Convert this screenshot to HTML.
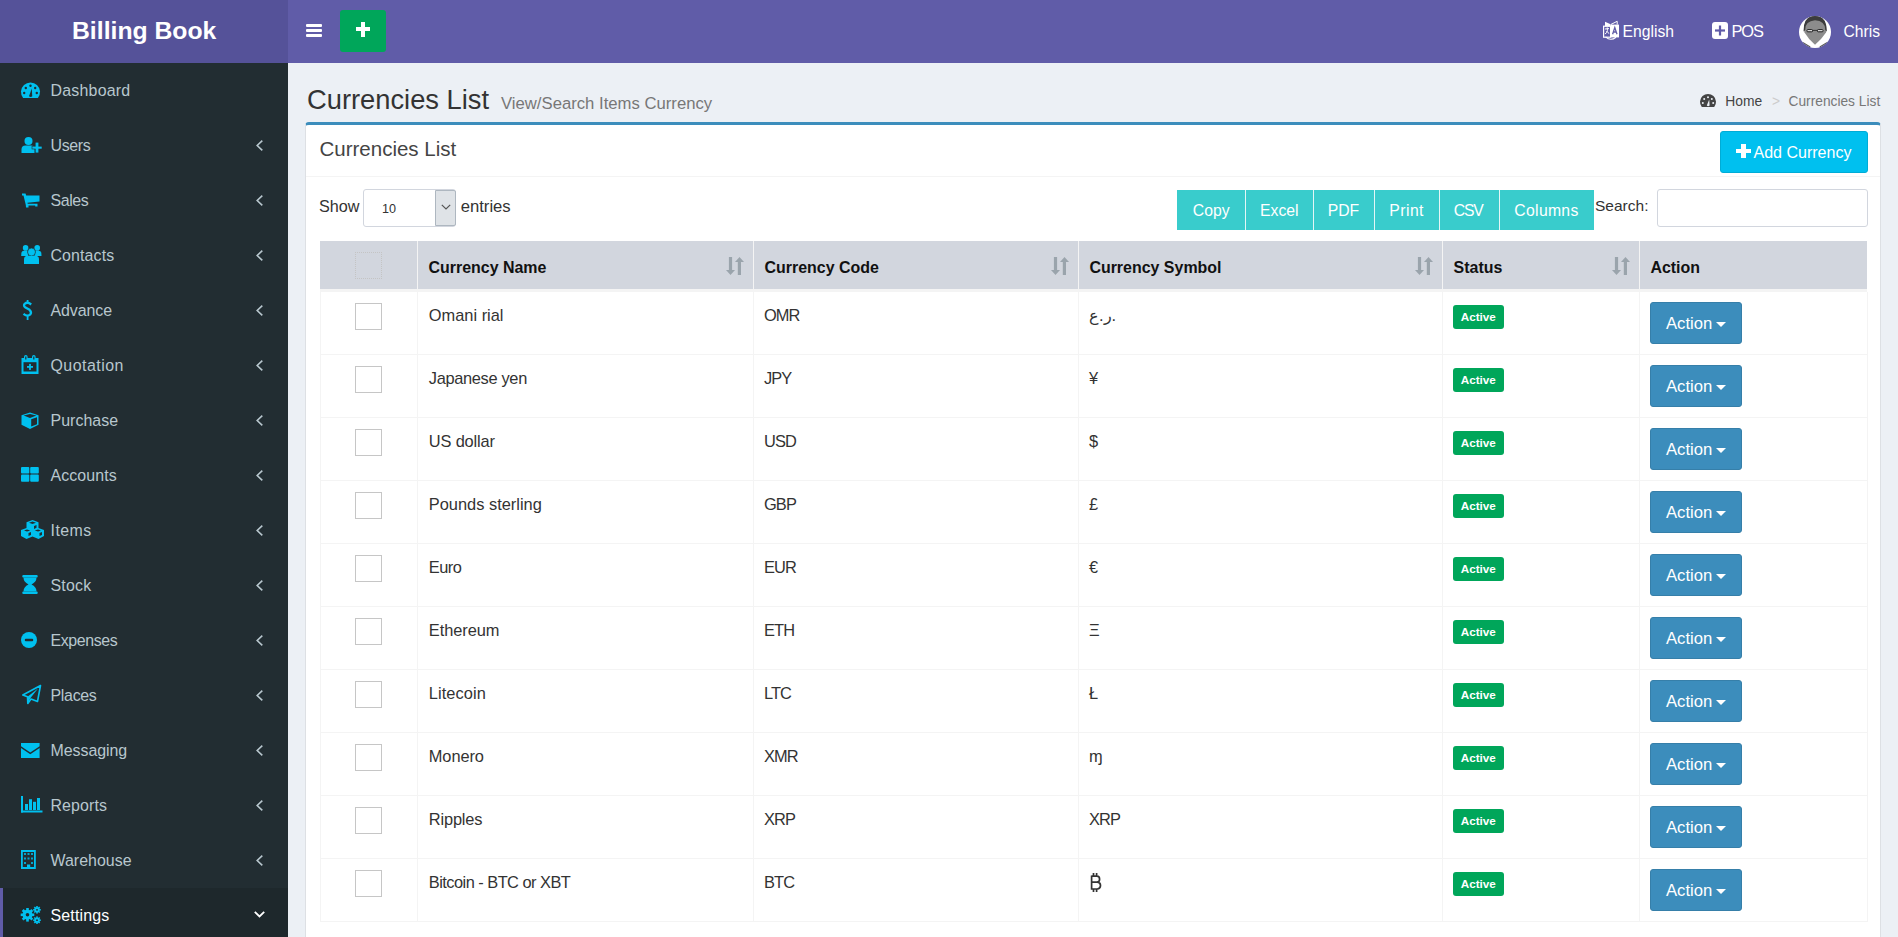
<!DOCTYPE html>
<html><head><meta charset="utf-8"><title>Currencies List</title><style>
*{box-sizing:border-box;margin:0;padding:0}
html,body{width:1898px;height:937px;overflow:hidden;background:#ecf0f5;font-family:"Liberation Sans",sans-serif;color:#333}
.a{position:absolute}
.t{position:absolute;white-space:nowrap;line-height:1}
svg{position:absolute;overflow:visible}
</style></head><body>
<div class="a" style="left:0px;top:0px;width:288px;height:63px;background:#555299"></div>
<div class="a" style="left:288px;top:0px;width:1610px;height:63px;background:#605ca8"></div>
<div class="t" style="left:72px;top:18.65px;font-size:24.75px;color:#fff;font-weight:bold;">Billing Book</div>
<div class="a" style="left:306px;top:24px;width:16px;height:3px;background:#fff;border-radius:1px"></div>
<div class="a" style="left:306px;top:29px;width:16px;height:3px;background:#fff;border-radius:1px"></div>
<div class="a" style="left:306px;top:34px;width:16px;height:3px;background:#fff;border-radius:1px"></div>
<div class="a" style="left:340px;top:10px;width:46px;height:42px;background:#00a65a;border-radius:3px"></div>
<div class="a" style="left:356px;top:27.4px;width:14.4px;height:4px;background:#fff"></div>
<div class="a" style="left:361.2px;top:22px;width:4px;height:15px;background:#fff"></div>
<svg style="left:1603px;top:21px" width="17" height="19" viewBox="0 0 17 19">
<rect x="0.6" y="5.2" width="7" height="11" fill="none" stroke="#fff" stroke-width="1.2"/>
<path d="M2 0.8 L7.6 3.2 L7.6 5.4 L2 5.4 Z" fill="#fff"/>
<path d="M7.6 3.6 L16 3.6 L16 16.4 L7.6 16.4 Z" fill="#fff"/>
<path d="M8 3.4 L14.2 0.3 L14.2 3.6" fill="none" stroke="#fff" stroke-width="1"/>
<path d="M9.6 13.2 L11.8 6.6 L14 13.2 M10.4 11 L13.2 11" fill="none" stroke="#605ca8" stroke-width="1.3"/>
<path d="M2 8 L6 7.6 M4.2 6.4 L4.4 9.5 Q4 12 2 13 M3.5 10 Q5 12 6.2 12.5" fill="none" stroke="#fff" stroke-width="1"/>
<path d="M2.6 15.8 Q7.5 20.5 13 16.2" fill="none" stroke="#fff" stroke-width="1.1"/>
</svg><div class="t" style="left:1622.5px;top:23.71px;font-size:15.7px;color:#fff;font-weight:normal;">English</div>
<svg style="left:1712px;top:22px" width="16" height="17" viewBox="0 0 16 17">
<rect x="0" y="0" width="16" height="17" rx="3" fill="#fff"/>
<rect x="3" y="7.4" width="10" height="2.2" fill="#605ca8"/>
<rect x="6.9" y="3.5" width="2.2" height="10" fill="#605ca8"/>
</svg><div class="t" style="left:1731.5px;top:23.12px;font-size:16.4px;color:#fff;font-weight:normal;letter-spacing:-1.1px">POS</div>
<svg style="left:1799px;top:16px" width="32" height="32" viewBox="0 0 32 32">
<defs><clipPath id="cc"><circle cx="16" cy="16" r="16"/></clipPath></defs>
<g clip-path="url(#cc)">
<rect width="32" height="32" fill="#fff"/>
<path d="M5 14 Q5 1 16 0.5 Q27.5 1 27.5 14 L27 16.5 Q22 24 16 28.8 Q10 24 5.5 16.5 Z" fill="#8c8c8c"/>
<path d="M4.6 15.5 Q4.2 0 16 -0.5 Q28 0 27.8 15.5 L26.2 14 Q26.5 5 16 4.2 Q6 5 6.2 14 Z" fill="#3c3c3c"/>
<rect x="8" y="13.6" width="5.6" height="2.2" rx="0.8" fill="#e8e8e8" stroke="#1e1e1e" stroke-width="1"/>
<rect x="18.4" y="13.6" width="5.6" height="2.2" rx="0.8" fill="#e8e8e8" stroke="#1e1e1e" stroke-width="1"/>
<path d="M13.6 14.4 L18.4 14.4" stroke="#1e1e1e" stroke-width="0.8"/>
<path d="M4 26 L11.5 30.5 L10 33 L2 33 Z" fill="#555"/><path d="M28 26 L20.5 30.5 L22 33 L30 33 Z" fill="#555"/>
</g></svg><div class="t" style="left:1843.5px;top:23.76px;font-size:15.64px;color:#fff;font-weight:normal;">Chris</div>
<div class="a" style="left:0px;top:63px;width:288px;height:874px;background:#222d32"></div>
<svg style="left:21px;top:82.7px" width="19" height="15" viewBox="0 0 19 15">
<path d="M2.1 15 A9.5 9.5 0 1 1 16.9 15 Z" fill="#00c0ef"/>
<circle cx="3.2" cy="10" r="1.2" fill="#222d32"/><circle cx="4.8" cy="5" r="1.2" fill="#222d32"/><circle cx="9.5" cy="2.8" r="1.2" fill="#222d32"/>
<circle cx="14.2" cy="5" r="1.2" fill="#222d32"/><circle cx="15.8" cy="10" r="1.2" fill="#222d32"/>
<path d="M8 13.2 L10.8 5.5 L11.3 13.2 Q9.8 14.8 8 13.2 Z" fill="#222d32"/></svg><div class="t" style="left:50.5px;top:82.50px;font-size:15.95px;color:#b8c7ce;font-weight:normal;letter-spacing:0.212px">Dashboard</div>
<svg style="left:21px;top:137px" width="21" height="16" viewBox="0 0 21 16">
<circle cx="7.5" cy="4" r="4" fill="#00c0ef"/>
<path d="M0.5 16 L0.5 12.5 Q0.5 8.5 4.5 8.5 L10.5 8.5 Q13 8.5 13.5 10 L13.5 16 Z" fill="#00c0ef"/>
<rect x="11" y="9.2" width="10" height="2.8" fill="#00c0ef" stroke="#222d32" stroke-width="0.6"/>
<rect x="14.6" y="5.6" width="2.8" height="10" fill="#00c0ef"/></svg><div class="t" style="left:50.5px;top:137.50px;font-size:15.95px;color:#b8c7ce;font-weight:normal;letter-spacing:-0.375px">Users</div>
<svg style="left:256px;top:139.5px" width="7" height="11" viewBox="0 0 7 11"><path d="M6.3 0.7 L1.2 5.5 L6.3 10.3" fill="none" stroke="#b8c7ce" stroke-width="1.6"/></svg>
<svg style="left:21.5px;top:193px" width="18" height="15" viewBox="0 0 18 15">
<path d="M0 0.5 L3.5 0.5 L4.2 2.5 L17.5 2.5 L17.5 8.5 L5.5 9.8 L5.7 10.8 L15.5 10.8 L15.5 13.5 L13.2 13.5 L13.2 12.6 L6.5 12.6 L6.5 14.5 L4 14.5 L3.8 12 L1.5 2.6 L0 2.6 Z" fill="#00c0ef"/></svg><div class="t" style="left:50.5px;top:192.50px;font-size:15.95px;color:#b8c7ce;font-weight:normal;letter-spacing:-0.400px">Sales</div>
<svg style="left:256px;top:194.5px" width="7" height="11" viewBox="0 0 7 11"><path d="M6.3 0.7 L1.2 5.5 L6.3 10.3" fill="none" stroke="#b8c7ce" stroke-width="1.6"/></svg>
<svg style="left:21px;top:245px" width="21" height="19" viewBox="0 0 21 19">
<circle cx="4.6" cy="2.9" r="2.8" fill="#00c0ef"/><circle cx="16.2" cy="2.9" r="2.8" fill="#00c0ef"/>
<path d="M0.2 11 L0.4 7.8 Q0.8 5.8 3 5.8 L6.8 5.8 L7.2 11 Z" fill="#00c0ef"/><path d="M20.5 11 L20.3 7.8 Q19.9 5.8 17.7 5.8 L13.9 5.8 L13.5 11 Z" fill="#00c0ef"/>
<circle cx="10.5" cy="7" r="4" fill="#00c0ef" stroke="#222d32" stroke-width="0.7"/>
<path d="M3 19 L3 14.5 Q3 10.8 6.5 10.8 L14.5 10.8 Q18 10.8 18 14.5 L18 19 Z" fill="#00c0ef"/></svg><div class="t" style="left:50.5px;top:247.50px;font-size:15.95px;color:#b8c7ce;font-weight:normal;letter-spacing:0.114px">Contacts</div>
<svg style="left:256px;top:249.5px" width="7" height="11" viewBox="0 0 7 11"><path d="M6.3 0.7 L1.2 5.5 L6.3 10.3" fill="none" stroke="#b8c7ce" stroke-width="1.6"/></svg>
<svg style="left:21.5px;top:299.5px" width="11" height="20" viewBox="0 0 11 20">
<path d="M9.2 4.5 Q5.5 1.5 2.7 3.8 Q1 5.8 3.5 7.6 L7.5 9.8 Q10 11.8 8.3 14.5 Q5.5 17 1.5 13.8" fill="none" stroke="#00c0ef" stroke-width="2.3"/>
<rect x="4.7" y="0" width="1.8" height="4" fill="#00c0ef"/><rect x="4.7" y="15.5" width="1.8" height="4.5" fill="#00c0ef"/></svg><div class="t" style="left:50.5px;top:302.50px;font-size:15.95px;color:#b8c7ce;font-weight:normal;letter-spacing:-0.083px">Advance</div>
<svg style="left:256px;top:304.5px" width="7" height="11" viewBox="0 0 7 11"><path d="M6.3 0.7 L1.2 5.5 L6.3 10.3" fill="none" stroke="#b8c7ce" stroke-width="1.6"/></svg>
<svg style="left:21px;top:355px" width="18" height="19" viewBox="0 0 18 19">
<path d="M0.5 3 L17.5 3 L17.5 19 L0.5 19 Z" fill="#00c0ef"/>
<rect x="2.5" y="7.2" width="13" height="9.3" fill="#222d32"/>
<rect x="3" y="0" width="3.6" height="5.5" rx="1.8" fill="#00c0ef"/><rect x="11" y="0" width="3.6" height="5.5" rx="1.8" fill="#00c0ef"/>
<rect x="4.2" y="1.5" width="1.2" height="3" fill="#222d32"/><rect x="12.2" y="1.5" width="1.2" height="3" fill="#222d32"/>
<rect x="6" y="11" width="6" height="1.8" fill="#00c0ef"/><rect x="8.1" y="8.9" width="1.8" height="6" fill="#00c0ef"/></svg><div class="t" style="left:50.5px;top:357.50px;font-size:15.95px;color:#b8c7ce;font-weight:normal;letter-spacing:0.475px">Quotation</div>
<svg style="left:256px;top:359.5px" width="7" height="11" viewBox="0 0 7 11"><path d="M6.3 0.7 L1.2 5.5 L6.3 10.3" fill="none" stroke="#b8c7ce" stroke-width="1.6"/></svg>
<svg style="left:21px;top:411.5px" width="18" height="18" viewBox="0 0 18 18">
<path d="M9 0.5 L17.5 3.2 L17.5 12.8 L9 17 L0.5 12.8 L0.5 3.2 Z" fill="#00c0ef"/>
<path d="M2.7 3.5 L9 1.9 L15.4 3.5 L9 6 Z" fill="#222d32"/>
<path d="M10.2 7.3 L16 5.2 L16 12.3 L10.2 14.6 Z" fill="#222d32"/></svg><div class="t" style="left:50.5px;top:412.50px;font-size:15.95px;color:#b8c7ce;font-weight:normal;letter-spacing:0.043px">Purchase</div>
<svg style="left:256px;top:414.5px" width="7" height="11" viewBox="0 0 7 11"><path d="M6.3 0.7 L1.2 5.5 L6.3 10.3" fill="none" stroke="#b8c7ce" stroke-width="1.6"/></svg>
<svg style="left:21px;top:466.5px" width="18" height="15" viewBox="0 0 18 15">
<rect x="0" y="0" width="8.3" height="6.6" rx="1" fill="#00c0ef"/><rect x="9.2" y="0" width="8.6" height="6.6" rx="1" fill="#00c0ef"/>
<rect x="0" y="7.6" width="8.3" height="7.2" rx="1" fill="#00c0ef"/><rect x="9.2" y="7.6" width="8.6" height="7.2" rx="1" fill="#00c0ef"/></svg><div class="t" style="left:50.5px;top:467.50px;font-size:15.95px;color:#b8c7ce;font-weight:normal;letter-spacing:0.100px">Accounts</div>
<svg style="left:256px;top:469.5px" width="7" height="11" viewBox="0 0 7 11"><path d="M6.3 0.7 L1.2 5.5 L6.3 10.3" fill="none" stroke="#b8c7ce" stroke-width="1.6"/></svg>
<svg style="left:21px;top:520px" width="23" height="19" viewBox="0 0 23 19">
<path d="M11.5 0 L17.5 2.3 L17.5 8 L23 10 L23 16 L17.5 19 L11.5 16.5 L5.5 19 L0 16 L0 10 L5.5 8 L5.5 2.3 Z" fill="#00c0ef"/>
<path d="M8 2.8 L11.5 1.6 L15 2.8 L11.5 4 Z" fill="#222d32"/>
<path d="M3 10.5 L6 9.5 L9.2 10.5 L6 11.6 Z" fill="#222d32"/><path d="M13.8 10.5 L17 9.5 L20 10.5 L17 11.6 Z" fill="#222d32"/>
<path d="M13 6 L15.5 5 L15.5 7.8 L13 9 Z" fill="#222d32"/>
<path d="M7.5 13 L10 12 L10 15 L7.5 16 Z" fill="#222d32"/><path d="M18.5 13 L21 12 L21 15 L18.5 16 Z" fill="#222d32"/></svg><div class="t" style="left:50.5px;top:522.50px;font-size:15.95px;color:#b8c7ce;font-weight:normal;letter-spacing:0.450px">Items</div>
<svg style="left:256px;top:524.5px" width="7" height="11" viewBox="0 0 7 11"><path d="M6.3 0.7 L1.2 5.5 L6.3 10.3" fill="none" stroke="#b8c7ce" stroke-width="1.6"/></svg>
<svg style="left:21.5px;top:575px" width="16" height="19" viewBox="0 0 16 19">
<rect x="0.3" y="0" width="15.4" height="2.6" rx="1" fill="#00c0ef"/><rect x="0.3" y="16.4" width="15.4" height="2.6" rx="1" fill="#00c0ef"/>
<path d="M1.5 2.6 L14.5 2.6 Q14.5 7 9.5 9.5 Q14.5 12 14.5 16.4 L1.5 16.4 Q1.5 12 6.5 9.5 Q1.5 7 1.5 2.6 Z" fill="#00c0ef"/></svg><div class="t" style="left:50.5px;top:577.50px;font-size:15.95px;color:#b8c7ce;font-weight:normal;letter-spacing:0.200px">Stock</div>
<svg style="left:256px;top:579.5px" width="7" height="11" viewBox="0 0 7 11"><path d="M6.3 0.7 L1.2 5.5 L6.3 10.3" fill="none" stroke="#b8c7ce" stroke-width="1.6"/></svg>
<svg style="left:21.4px;top:631.6px" width="16" height="16" viewBox="0 0 16 16">
<circle cx="8" cy="8" r="8" fill="#00c0ef"/><rect x="3.8" y="6.8" width="8.4" height="2.4" rx="1" fill="#222d32"/></svg><div class="t" style="left:50.5px;top:632.50px;font-size:15.95px;color:#b8c7ce;font-weight:normal;letter-spacing:-0.386px">Expenses</div>
<svg style="left:256px;top:634.5px" width="7" height="11" viewBox="0 0 7 11"><path d="M6.3 0.7 L1.2 5.5 L6.3 10.3" fill="none" stroke="#b8c7ce" stroke-width="1.6"/></svg>
<svg style="left:21.5px;top:685px" width="19" height="19" viewBox="0 0 19 19">
<path d="M18.5 0.5 L0.8 10 L5.5 11.8 L5.8 18.5 L9 14 L15.5 16.5 Z" fill="none" stroke="#00c0ef" stroke-width="1.6" stroke-linejoin="round"/>
<path d="M5.5 11.8 L16 3.5 L8.5 13 L5.8 18 Z" fill="#00c0ef"/></svg><div class="t" style="left:50.5px;top:687.50px;font-size:15.95px;color:#b8c7ce;font-weight:normal;letter-spacing:-0.300px">Places</div>
<svg style="left:256px;top:689.5px" width="7" height="11" viewBox="0 0 7 11"><path d="M6.3 0.7 L1.2 5.5 L6.3 10.3" fill="none" stroke="#b8c7ce" stroke-width="1.6"/></svg>
<svg style="left:21.4px;top:742.8px" width="19" height="15" viewBox="0 0 19 15">
<path d="M0 0 L18.6 0 L18.6 3.2 L9.3 9.5 L0 3.2 Z" fill="#00c0ef"/>
<path d="M0 5 L9.3 11.3 L18.6 5 L18.6 15 L0 15 Z" fill="#00c0ef"/></svg><div class="t" style="left:50.5px;top:742.50px;font-size:15.95px;color:#b8c7ce;font-weight:normal;letter-spacing:-0.050px">Messaging</div>
<svg style="left:256px;top:744.5px" width="7" height="11" viewBox="0 0 7 11"><path d="M6.3 0.7 L1.2 5.5 L6.3 10.3" fill="none" stroke="#b8c7ce" stroke-width="1.6"/></svg>
<svg style="left:21px;top:796.3px" width="22" height="17" viewBox="0 0 22 17">
<rect x="0" y="0" width="2" height="16.5" fill="#00c0ef"/><rect x="0" y="14.5" width="21.5" height="2" fill="#00c0ef"/>
<rect x="4" y="8" width="3" height="6" fill="#00c0ef"/><rect x="8" y="3.2" width="3" height="10.8" fill="#00c0ef"/>
<rect x="12" y="5.8" width="3" height="8.2" fill="#00c0ef"/><rect x="16" y="2" width="3" height="12" fill="#00c0ef"/></svg><div class="t" style="left:50.5px;top:797.50px;font-size:15.95px;color:#b8c7ce;font-weight:normal;letter-spacing:0.100px">Reports</div>
<svg style="left:256px;top:799.5px" width="7" height="11" viewBox="0 0 7 11"><path d="M6.3 0.7 L1.2 5.5 L6.3 10.3" fill="none" stroke="#b8c7ce" stroke-width="1.6"/></svg>
<svg style="left:21.4px;top:850px" width="15" height="19" viewBox="0 0 15 19">
<path d="M0 0 L14.8 0 L14.8 19 L0 19 Z M1.8 2 L1.8 17 L13 17 L13 2 Z" fill="#00c0ef" fill-rule="evenodd"/>
<g fill="#00c0ef" opacity="0.8"><rect x="3" y="3" width="2" height="2"/><rect x="6.5" y="3" width="2" height="2"/><rect x="10" y="3" width="2" height="2"/>
<rect x="3" y="7.5" width="2" height="2"/><rect x="6.5" y="7.5" width="2" height="2"/><rect x="10" y="7.5" width="2" height="2"/>
<rect x="3" y="12" width="2" height="2"/><rect x="10" y="12" width="2" height="2"/></g>
<rect x="6" y="14.5" width="3.2" height="3" fill="#00c0ef"/></svg><div class="t" style="left:50.5px;top:852.50px;font-size:15.95px;color:#b8c7ce;font-weight:normal;letter-spacing:0.025px">Warehouse</div>
<svg style="left:256px;top:854.5px" width="7" height="11" viewBox="0 0 7 11"><path d="M6.3 0.7 L1.2 5.5 L6.3 10.3" fill="none" stroke="#b8c7ce" stroke-width="1.6"/></svg>
<div class="a" style="left:0px;top:888px;width:288px;height:55px;background:#1e282c"></div>
<div class="a" style="left:0px;top:888px;width:3px;height:55px;background:#605ca8"></div>
<svg style="left:21px;top:905.5px" width="20" height="18" viewBox="0 0 20 18">
<g fill="#00c0ef"><circle cx="6.5" cy="8.8" r="5"/>
<g transform="translate(6.5 8.8)"><rect x="-1.3" y="-6.8" width="2.6" height="13.6"/><rect x="-6.8" y="-1.3" width="13.6" height="2.6"/>
<rect x="-1.3" y="-6.8" width="2.6" height="13.6" transform="rotate(45)"/><rect x="-1.3" y="-6.8" width="2.6" height="13.6" transform="rotate(-45)"/></g>
<circle cx="16" cy="3.8" r="2.6"/><g transform="translate(16 3.8)"><rect x="-0.8" y="-3.8" width="1.6" height="7.6"/><rect x="-3.8" y="-0.8" width="7.6" height="1.6"/>
<rect x="-0.8" y="-3.8" width="1.6" height="7.6" transform="rotate(45)"/><rect x="-0.8" y="-3.8" width="1.6" height="7.6" transform="rotate(-45)"/></g>
<circle cx="16" cy="14.2" r="2.6"/><g transform="translate(16 14.2)"><rect x="-0.8" y="-3.8" width="1.6" height="7.6"/><rect x="-3.8" y="-0.8" width="7.6" height="1.6"/>
<rect x="-0.8" y="-3.8" width="1.6" height="7.6" transform="rotate(45)"/><rect x="-0.8" y="-3.8" width="1.6" height="7.6" transform="rotate(-45)"/></g></g>
<circle cx="6.5" cy="8.8" r="1.8" fill="#1e282c"/><circle cx="16" cy="3.8" r="0.9" fill="#1e282c"/><circle cx="16" cy="14.2" r="0.9" fill="#1e282c"/></svg><div class="t" style="left:50.5px;top:907.50px;font-size:15.95px;color:#fff;font-weight:normal;letter-spacing:0.157px">Settings</div>
<svg style="left:254px;top:911px" width="11" height="7" viewBox="0 0 11 7"><path d="M0.8 0.8 L5.5 5.5 L10.2 0.8" fill="none" stroke="#fff" stroke-width="1.8"/></svg>
<div class="t" style="left:307px;top:86.19px;font-size:27.3px;color:#333;font-weight:normal;">Currencies List</div>
<div class="t" style="left:501px;top:96.16px;font-size:16.7px;color:#777;font-weight:normal;">View/Search Items Currency</div>
<svg style="left:1700px;top:95px" width="16" height="12" viewBox="0 0 16 12">
<path d="M1.8 12 A8 8 0 1 1 14.2 12 Z" fill="#444"/>
<circle cx="2.8" cy="8" r="1" fill="#ecf0f5"/><circle cx="4.2" cy="4" r="1" fill="#ecf0f5"/><circle cx="8" cy="2.3" r="1" fill="#ecf0f5"/>
<circle cx="11.8" cy="4" r="1" fill="#ecf0f5"/><circle cx="13.2" cy="8" r="1" fill="#ecf0f5"/>
<path d="M6.8 10.5 L9.2 4.5 L9.6 10.5 Q8.2 11.8 6.8 10.5 Z" fill="#ecf0f5"/></svg><div class="t" style="left:1725.3px;top:95.26px;font-size:13.87px;color:#444;font-weight:normal;">Home</div>
<div class="t" style="left:1772px;top:95.32px;font-size:13.8px;color:#ccc;font-weight:normal;">&gt;</div>
<div class="t" style="left:1788.5px;top:95.36px;font-size:13.75px;color:#777;font-weight:normal;">Currencies List</div>
<div class="a" style="left:305px;top:122px;width:1576px;height:815px;background:#fff;border-top:3px solid #3c8dbc;border-left:1px solid #dde0e4;border-right:1px solid #dde0e4;border-radius:4px 4px 0 0"></div>
<div class="t" style="left:319.5px;top:138.95px;font-size:20.5px;color:#444;font-weight:normal;">Currencies List</div>
<div class="a" style="left:306px;top:176px;width:1574px;height:1px;background:#f4f4f4"></div>
<div class="a" style="left:1720px;top:131px;width:148px;height:42px;background:#00c0ef;border:1px solid #00acd6;border-radius:3px"></div>
<div class="a" style="left:1736px;top:148.8px;width:15px;height:4.2px;background:#fff"></div>
<div class="a" style="left:1741.4px;top:143.8px;width:4.2px;height:14.5px;background:#fff"></div>
<div class="t" style="left:1753.5px;top:144.43px;font-size:16.03px;color:#fff;font-weight:normal;">Add Currency</div>
<div class="t" style="left:319px;top:197.80px;font-size:16.19px;color:#333;font-weight:normal;">Show</div>
<div class="a" style="left:363px;top:189px;width:93px;height:38px;background:#fff;border:1px solid #d2d6de;border-radius:3px"></div>
<div class="a" style="left:435px;top:190px;width:20.5px;height:36px;background:#dfe3e7;border:1px solid #aeb7c0;border-radius:0 2px 2px 0"></div>
<svg style="left:440.5px;top:204px" width="10" height="6" viewBox="0 0 10 6"><path d="M0.8 0.8 L5 5 L9.2 0.8" fill="none" stroke="#555" stroke-width="1.2"/></svg>
<div class="t" style="left:382px;top:203.13px;font-size:12.6px;color:#333;font-weight:normal;">10</div>
<div class="t" style="left:460.7px;top:198.90px;font-size:16.66px;color:#333;font-weight:normal;">entries</div>
<div class="a" style="left:1177px;top:190px;width:417px;height:40px;background:#39cccc"></div>
<div class="t" style="left:1177.00px;width:68.4px;top:202.66px;font-size:15.76px;color:#fff;text-align:center;letter-spacing:0px">Copy</div>
<div class="a" style="left:1245.4px;top:190px;width:1px;height:40px;background:#e3f6f6"></div>
<div class="t" style="left:1245.40px;width:67.9px;top:202.66px;font-size:15.76px;color:#fff;text-align:center;letter-spacing:0px">Excel</div>
<div class="a" style="left:1313.3px;top:190px;width:1px;height:40px;background:#e3f6f6"></div>
<div class="t" style="left:1313.30px;width:60.3px;top:202.66px;font-size:15.76px;color:#fff;text-align:center;letter-spacing:0px">PDF</div>
<div class="a" style="left:1373.6px;top:190px;width:1px;height:40px;background:#e3f6f6"></div>
<div class="t" style="left:1373.82px;width:65.6px;top:202.66px;font-size:15.76px;color:#fff;text-align:center;letter-spacing:0.45px">Print</div>
<div class="a" style="left:1439.2px;top:190px;width:1px;height:40px;background:#e3f6f6"></div>
<div class="t" style="left:1438.60px;width:59.3px;top:202.66px;font-size:15.76px;color:#fff;text-align:center;letter-spacing:-1.2px">CSV</div>
<div class="a" style="left:1498.5px;top:190px;width:1px;height:40px;background:#e3f6f6"></div>
<div class="t" style="left:1498.65px;width:95.7px;top:202.66px;font-size:15.76px;color:#fff;text-align:center;letter-spacing:0.3px">Columns</div>
<div class="t" style="left:1595px;top:198.46px;font-size:15.52px;color:#333;font-weight:normal;">Search:</div>
<div class="a" style="left:1657px;top:189px;width:211px;height:38px;background:#fff;border:1px solid #d2d6de;border-radius:3px"></div>
<div class="a" style="left:320px;top:241px;width:1547px;height:48px;background:#d2d6de"></div>
<div class="a" style="left:320px;top:289px;width:1547px;height:3px;background:#f4f4f4"></div>
<div class="a" style="left:417.0px;top:241px;width:1.2px;height:48px;background:#f4f4f4"></div>
<div class="a" style="left:753.0px;top:241px;width:1.2px;height:48px;background:#f4f4f4"></div>
<div class="a" style="left:1077.9px;top:241px;width:1.2px;height:48px;background:#f4f4f4"></div>
<div class="a" style="left:1442.1px;top:241px;width:1.2px;height:48px;background:#f4f4f4"></div>
<div class="a" style="left:1638.9px;top:241px;width:1.2px;height:48px;background:#f4f4f4"></div>
<div class="t" style="left:428.5px;top:259.99px;font-size:15.96px;color:#111;font-weight:bold;">Currency Name</div>
<svg style="left:726.0px;top:257px" width="18" height="18" viewBox="0 0 18 18" >
<g fill="#9aa4ac"><rect x="2.9" y="0" width="3.2" height="14"/><path d="M0 13 L9 13 L4.5 18 Z"/>
<rect x="11.8" y="4" width="3.2" height="14"/><path d="M9 5 L18 5 L13.5 0 Z"/></g></svg>
<div class="t" style="left:764.5px;top:259.99px;font-size:15.96px;color:#111;font-weight:bold;">Currency Code</div>
<svg style="left:1050.9px;top:257px" width="18" height="18" viewBox="0 0 18 18" >
<g fill="#9aa4ac"><rect x="2.9" y="0" width="3.2" height="14"/><path d="M0 13 L9 13 L4.5 18 Z"/>
<rect x="11.8" y="4" width="3.2" height="14"/><path d="M9 5 L18 5 L13.5 0 Z"/></g></svg>
<div class="t" style="left:1089.4px;top:259.99px;font-size:15.96px;color:#111;font-weight:bold;">Currency Symbol</div>
<svg style="left:1415.1px;top:257px" width="18" height="18" viewBox="0 0 18 18" >
<g fill="#9aa4ac"><rect x="2.9" y="0" width="3.2" height="14"/><path d="M0 13 L9 13 L4.5 18 Z"/>
<rect x="11.8" y="4" width="3.2" height="14"/><path d="M9 5 L18 5 L13.5 0 Z"/></g></svg>
<div class="t" style="left:1453.6px;top:259.99px;font-size:15.96px;color:#111;font-weight:bold;">Status</div>
<svg style="left:1611.9px;top:257px" width="18" height="18" viewBox="0 0 18 18" >
<g fill="#9aa4ac"><rect x="2.9" y="0" width="3.2" height="14"/><path d="M0 13 L9 13 L4.5 18 Z"/>
<rect x="11.8" y="4" width="3.2" height="14"/><path d="M9 5 L18 5 L13.5 0 Z"/></g></svg>
<div class="t" style="left:1650.4px;top:259.99px;font-size:15.96px;color:#111;font-weight:bold;">Action</div>
<div class="a" style="left:355px;top:252px;width:27px;height:27px;border:1px dotted #c4c4c4"></div>
<div class="a" style="left:319.5px;top:292px;width:1px;height:630px;background:#f4f4f4"></div>
<div class="a" style="left:1866.5px;top:292px;width:1px;height:630px;background:#f4f4f4"></div>
<div class="a" style="left:417.0px;top:292px;width:1.2px;height:630px;background:#f4f4f4"></div>
<div class="a" style="left:753.0px;top:292px;width:1.2px;height:630px;background:#f4f4f4"></div>
<div class="a" style="left:1077.9px;top:292px;width:1.2px;height:630px;background:#f4f4f4"></div>
<div class="a" style="left:1442.1px;top:292px;width:1.2px;height:630px;background:#f4f4f4"></div>
<div class="a" style="left:1638.9px;top:292px;width:1.2px;height:630px;background:#f4f4f4"></div>
<div class="a" style="left:320px;top:354px;width:1547px;height:1.2px;background:#f4f4f4"></div>
<div class="a" style="left:355px;top:303px;width:27px;height:27px;border:1px solid #c6c6c6;background:#fff"></div>
<div class="t" style="left:428.8px;top:306.92px;font-size:16.4px;color:#333;font-weight:normal;letter-spacing:0.000px">Omani rial</div>
<div class="t" style="left:764px;top:306.92px;font-size:16.4px;color:#333;font-weight:normal;letter-spacing:-0.9px">OMR</div>
<div class="t" style="left:1089px;top:306.92px;font-size:16.4px;color:#333;font-weight:normal;">&#1585;.&#1593;.</div>
<div class="a" style="left:1453px;top:305px;width:50.5px;height:23.6px;background:#00a65a;border-radius:3px"></div>
<div class="t" style="left:1453px;width:50.5px;top:311.30px;font-size:11.7px;color:#fff;font-weight:bold;text-align:center">Active</div>
<div class="a" style="left:1650px;top:302px;width:92px;height:41.5px;background:#3c8dbc;border:1px solid #367fa9;border-radius:3px"></div>
<div class="t" style="left:1666px;top:315.50px;font-size:16.66px;color:#fff;font-weight:normal;">Action</div>
<svg style="left:1716px;top:322px" width="10" height="5" viewBox="0 0 10 5"><path d="M0 0 L10 0 L5 5 Z" fill="#fff"/></svg>
<div class="a" style="left:320px;top:417px;width:1547px;height:1.2px;background:#f4f4f4"></div>
<div class="a" style="left:355px;top:366px;width:27px;height:27px;border:1px solid #c6c6c6;background:#fff"></div>
<div class="t" style="left:428.8px;top:369.92px;font-size:16.4px;color:#333;font-weight:normal;letter-spacing:-0.327px">Japanese yen</div>
<div class="t" style="left:764px;top:369.92px;font-size:16.4px;color:#333;font-weight:normal;letter-spacing:-0.9px">JPY</div>
<div class="t" style="left:1089px;top:369.92px;font-size:16.4px;color:#333;font-weight:normal;">&yen;</div>
<div class="a" style="left:1453px;top:368px;width:50.5px;height:23.6px;background:#00a65a;border-radius:3px"></div>
<div class="t" style="left:1453px;width:50.5px;top:374.30px;font-size:11.7px;color:#fff;font-weight:bold;text-align:center">Active</div>
<div class="a" style="left:1650px;top:365px;width:92px;height:41.5px;background:#3c8dbc;border:1px solid #367fa9;border-radius:3px"></div>
<div class="t" style="left:1666px;top:378.50px;font-size:16.66px;color:#fff;font-weight:normal;">Action</div>
<svg style="left:1716px;top:385px" width="10" height="5" viewBox="0 0 10 5"><path d="M0 0 L10 0 L5 5 Z" fill="#fff"/></svg>
<div class="a" style="left:320px;top:480px;width:1547px;height:1.2px;background:#f4f4f4"></div>
<div class="a" style="left:355px;top:429px;width:27px;height:27px;border:1px solid #c6c6c6;background:#fff"></div>
<div class="t" style="left:428.8px;top:432.92px;font-size:16.4px;color:#333;font-weight:normal;letter-spacing:-0.163px">US dollar</div>
<div class="t" style="left:764px;top:432.92px;font-size:16.4px;color:#333;font-weight:normal;letter-spacing:-0.9px">USD</div>
<div class="t" style="left:1089px;top:432.92px;font-size:16.4px;color:#333;font-weight:normal;">$</div>
<div class="a" style="left:1453px;top:431px;width:50.5px;height:23.6px;background:#00a65a;border-radius:3px"></div>
<div class="t" style="left:1453px;width:50.5px;top:437.30px;font-size:11.7px;color:#fff;font-weight:bold;text-align:center">Active</div>
<div class="a" style="left:1650px;top:428px;width:92px;height:41.5px;background:#3c8dbc;border:1px solid #367fa9;border-radius:3px"></div>
<div class="t" style="left:1666px;top:441.50px;font-size:16.66px;color:#fff;font-weight:normal;">Action</div>
<svg style="left:1716px;top:448px" width="10" height="5" viewBox="0 0 10 5"><path d="M0 0 L10 0 L5 5 Z" fill="#fff"/></svg>
<div class="a" style="left:320px;top:543px;width:1547px;height:1.2px;background:#f4f4f4"></div>
<div class="a" style="left:355px;top:492px;width:27px;height:27px;border:1px solid #c6c6c6;background:#fff"></div>
<div class="t" style="left:428.8px;top:495.92px;font-size:16.4px;color:#333;font-weight:normal;letter-spacing:0.000px">Pounds sterling</div>
<div class="t" style="left:764px;top:495.92px;font-size:16.4px;color:#333;font-weight:normal;letter-spacing:-0.9px">GBP</div>
<div class="t" style="left:1089px;top:495.92px;font-size:16.4px;color:#333;font-weight:normal;">&pound;</div>
<div class="a" style="left:1453px;top:494px;width:50.5px;height:23.6px;background:#00a65a;border-radius:3px"></div>
<div class="t" style="left:1453px;width:50.5px;top:500.30px;font-size:11.7px;color:#fff;font-weight:bold;text-align:center">Active</div>
<div class="a" style="left:1650px;top:491px;width:92px;height:41.5px;background:#3c8dbc;border:1px solid #367fa9;border-radius:3px"></div>
<div class="t" style="left:1666px;top:504.50px;font-size:16.66px;color:#fff;font-weight:normal;">Action</div>
<svg style="left:1716px;top:511px" width="10" height="5" viewBox="0 0 10 5"><path d="M0 0 L10 0 L5 5 Z" fill="#fff"/></svg>
<div class="a" style="left:320px;top:606px;width:1547px;height:1.2px;background:#f4f4f4"></div>
<div class="a" style="left:355px;top:555px;width:27px;height:27px;border:1px solid #c6c6c6;background:#fff"></div>
<div class="t" style="left:428.8px;top:558.92px;font-size:16.4px;color:#333;font-weight:normal;letter-spacing:-0.533px">Euro</div>
<div class="t" style="left:764px;top:558.92px;font-size:16.4px;color:#333;font-weight:normal;letter-spacing:-0.9px">EUR</div>
<div class="t" style="left:1089px;top:558.92px;font-size:16.4px;color:#333;font-weight:normal;">&euro;</div>
<div class="a" style="left:1453px;top:557px;width:50.5px;height:23.6px;background:#00a65a;border-radius:3px"></div>
<div class="t" style="left:1453px;width:50.5px;top:563.30px;font-size:11.7px;color:#fff;font-weight:bold;text-align:center">Active</div>
<div class="a" style="left:1650px;top:554px;width:92px;height:41.5px;background:#3c8dbc;border:1px solid #367fa9;border-radius:3px"></div>
<div class="t" style="left:1666px;top:567.50px;font-size:16.66px;color:#fff;font-weight:normal;">Action</div>
<svg style="left:1716px;top:574px" width="10" height="5" viewBox="0 0 10 5"><path d="M0 0 L10 0 L5 5 Z" fill="#fff"/></svg>
<div class="a" style="left:320px;top:669px;width:1547px;height:1.2px;background:#f4f4f4"></div>
<div class="a" style="left:355px;top:618px;width:27px;height:27px;border:1px solid #c6c6c6;background:#fff"></div>
<div class="t" style="left:428.8px;top:621.92px;font-size:16.4px;color:#333;font-weight:normal;letter-spacing:-0.057px">Ethereum</div>
<div class="t" style="left:764px;top:621.92px;font-size:16.4px;color:#333;font-weight:normal;letter-spacing:-0.9px">ETH</div>
<div class="t" style="left:1089px;top:621.92px;font-size:16.4px;color:#333;font-weight:normal;">&#926;</div>
<div class="a" style="left:1453px;top:620px;width:50.5px;height:23.6px;background:#00a65a;border-radius:3px"></div>
<div class="t" style="left:1453px;width:50.5px;top:626.30px;font-size:11.7px;color:#fff;font-weight:bold;text-align:center">Active</div>
<div class="a" style="left:1650px;top:617px;width:92px;height:41.5px;background:#3c8dbc;border:1px solid #367fa9;border-radius:3px"></div>
<div class="t" style="left:1666px;top:630.50px;font-size:16.66px;color:#fff;font-weight:normal;">Action</div>
<svg style="left:1716px;top:637px" width="10" height="5" viewBox="0 0 10 5"><path d="M0 0 L10 0 L5 5 Z" fill="#fff"/></svg>
<div class="a" style="left:320px;top:732px;width:1547px;height:1.2px;background:#f4f4f4"></div>
<div class="a" style="left:355px;top:681px;width:27px;height:27px;border:1px solid #c6c6c6;background:#fff"></div>
<div class="t" style="left:428.8px;top:684.92px;font-size:16.4px;color:#333;font-weight:normal;letter-spacing:0.086px">Litecoin</div>
<div class="t" style="left:764px;top:684.92px;font-size:16.4px;color:#333;font-weight:normal;letter-spacing:-0.9px">LTC</div>
<div class="t" style="left:1089px;top:684.92px;font-size:16.4px;color:#333;font-weight:normal;">&#321;</div>
<div class="a" style="left:1453px;top:683px;width:50.5px;height:23.6px;background:#00a65a;border-radius:3px"></div>
<div class="t" style="left:1453px;width:50.5px;top:689.30px;font-size:11.7px;color:#fff;font-weight:bold;text-align:center">Active</div>
<div class="a" style="left:1650px;top:680px;width:92px;height:41.5px;background:#3c8dbc;border:1px solid #367fa9;border-radius:3px"></div>
<div class="t" style="left:1666px;top:693.50px;font-size:16.66px;color:#fff;font-weight:normal;">Action</div>
<svg style="left:1716px;top:700px" width="10" height="5" viewBox="0 0 10 5"><path d="M0 0 L10 0 L5 5 Z" fill="#fff"/></svg>
<div class="a" style="left:320px;top:795px;width:1547px;height:1.2px;background:#f4f4f4"></div>
<div class="a" style="left:355px;top:744px;width:27px;height:27px;border:1px solid #c6c6c6;background:#fff"></div>
<div class="t" style="left:428.8px;top:747.92px;font-size:16.4px;color:#333;font-weight:normal;letter-spacing:-0.080px">Monero</div>
<div class="t" style="left:764px;top:747.92px;font-size:16.4px;color:#333;font-weight:normal;letter-spacing:-0.9px">XMR</div>
<div class="t" style="left:1089px;top:747.92px;font-size:16.4px;color:#333;font-weight:normal;">&#625;</div>
<div class="a" style="left:1453px;top:746px;width:50.5px;height:23.6px;background:#00a65a;border-radius:3px"></div>
<div class="t" style="left:1453px;width:50.5px;top:752.30px;font-size:11.7px;color:#fff;font-weight:bold;text-align:center">Active</div>
<div class="a" style="left:1650px;top:743px;width:92px;height:41.5px;background:#3c8dbc;border:1px solid #367fa9;border-radius:3px"></div>
<div class="t" style="left:1666px;top:756.50px;font-size:16.66px;color:#fff;font-weight:normal;">Action</div>
<svg style="left:1716px;top:763px" width="10" height="5" viewBox="0 0 10 5"><path d="M0 0 L10 0 L5 5 Z" fill="#fff"/></svg>
<div class="a" style="left:320px;top:858px;width:1547px;height:1.2px;background:#f4f4f4"></div>
<div class="a" style="left:355px;top:807px;width:27px;height:27px;border:1px solid #c6c6c6;background:#fff"></div>
<div class="t" style="left:428.8px;top:810.92px;font-size:16.4px;color:#333;font-weight:normal;letter-spacing:-0.167px">Ripples</div>
<div class="t" style="left:764px;top:810.92px;font-size:16.4px;color:#333;font-weight:normal;letter-spacing:-0.9px">XRP</div>
<div class="t" style="left:1089px;top:810.92px;font-size:16.4px;color:#333;font-weight:normal;letter-spacing:-0.9px">XRP</div>
<div class="a" style="left:1453px;top:809px;width:50.5px;height:23.6px;background:#00a65a;border-radius:3px"></div>
<div class="t" style="left:1453px;width:50.5px;top:815.30px;font-size:11.7px;color:#fff;font-weight:bold;text-align:center">Active</div>
<div class="a" style="left:1650px;top:806px;width:92px;height:41.5px;background:#3c8dbc;border:1px solid #367fa9;border-radius:3px"></div>
<div class="t" style="left:1666px;top:819.50px;font-size:16.66px;color:#fff;font-weight:normal;">Action</div>
<svg style="left:1716px;top:826px" width="10" height="5" viewBox="0 0 10 5"><path d="M0 0 L10 0 L5 5 Z" fill="#fff"/></svg>
<div class="a" style="left:320px;top:921px;width:1547px;height:1.2px;background:#f4f4f4"></div>
<div class="a" style="left:355px;top:870px;width:27px;height:27px;border:1px solid #c6c6c6;background:#fff"></div>
<div class="t" style="left:428.8px;top:873.92px;font-size:16.4px;color:#333;font-weight:normal;letter-spacing:-0.532px">Bitcoin - BTC or XBT</div>
<div class="t" style="left:764px;top:873.92px;font-size:16.4px;color:#333;font-weight:normal;letter-spacing:-0.9px">BTC</div>
<svg style="left:1089px;top:872.8px" width="13" height="19" viewBox="0 0 13 19"><path d="M2.6 3.2 L8 3.2 Q10.6 3.4 10.6 6.2 Q10.6 8.9 8 9.2 L2.6 9.2 M2.6 9.2 L8.4 9.2 Q11.5 9.5 11.5 12.6 Q11.5 15.8 8.2 16 L2.6 16 M2.6 2.4 L2.6 16.8 M4.5 0 L4.5 3.2 M7.6 0 L7.6 3.2 M4.5 16 L4.5 19 M7.6 16 L7.6 19" fill="none" stroke="#333" stroke-width="1.7"/></svg>
<div class="a" style="left:1453px;top:872px;width:50.5px;height:23.6px;background:#00a65a;border-radius:3px"></div>
<div class="t" style="left:1453px;width:50.5px;top:878.30px;font-size:11.7px;color:#fff;font-weight:bold;text-align:center">Active</div>
<div class="a" style="left:1650px;top:869px;width:92px;height:41.5px;background:#3c8dbc;border:1px solid #367fa9;border-radius:3px"></div>
<div class="t" style="left:1666px;top:882.50px;font-size:16.66px;color:#fff;font-weight:normal;">Action</div>
<svg style="left:1716px;top:889px" width="10" height="5" viewBox="0 0 10 5"><path d="M0 0 L10 0 L5 5 Z" fill="#fff"/></svg>
</body></html>
